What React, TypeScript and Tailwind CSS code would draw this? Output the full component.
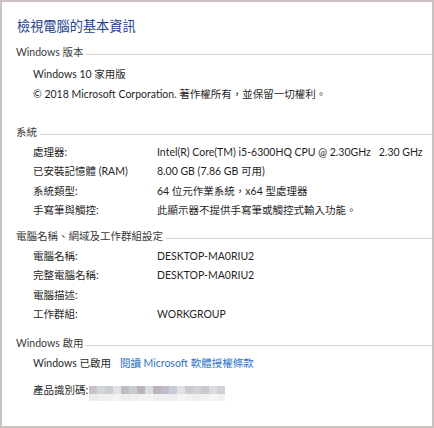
const font = { fontFamily: 'Lato, "Noto Sans CJK TC", sans-serif' }

const blurTop = ['#c9c1c9', '#d1d5d9', '#c9cdd5', '#e1e1e3', '#c1b9c3', '#c9cdd1', '#bbb3bb', '#d9dde1', '#bbb3bd', '#c3bbc9', '#c9cdd5', '#e1e1e3', '#c9cdd1', '#d1d1d9', '#c9c9d1', '#dadde1', '#d0d0d6']
const blurBottom = ['#ececee', '#eeeeee', '#f0f0f0', '#f3f3f3', '#eeeeef', '#efefef', '#f1f1f1', '#f4f4f4', '#eeeeee', '#f0f0f0', '#efeff0', '#f4f4f4', '#f1f1f1', '#eeeeef', '#f2f2f2', '#f4f4f4', '#f2f2f2']

function Header({ title, className }: { title: string, className?: string }) {
    return (
        <div className={`flex items-center h-[20px] pl-[14px] ${className ?? ''}`}>
            <div className="text-[10.5px] text-[#3a3a3a] whitespace-nowrap">{title}</div>
            <div className="flex-1 h-px bg-[#d8d3d3] ml-[3px] mt-[2px]"></div>
        </div>
    )
}

function Row({ label, value }: { label: string, value?: string }) {
    return (
        <div className="flex items-center h-[19.5px] pl-[31px] text-[10.5px] text-[#1f1f1f]">
            <div className="w-[124px] whitespace-nowrap">{label}</div>
            <div className="whitespace-pre">{value}</div>
        </div>
    )
}

export default function App() {
    return (
        <div style={font} className="w-[434px] h-[428px] border-2 border-[#cbc1c1] bg-white flex flex-col">
            <div className="mt-[15px] h-[20px] flex items-center pl-[15px] text-[13.2px] text-[#233f95]">檢視電腦的基本資訊</div>

            <Header title="Windows 版本" className="mt-[6px]" />
            <div className="mt-[2.5px]">
                <Row label="Windows 10 家用版" />
                <div className="flex items-center h-[19.5px] pl-[31px] text-[10.5px] text-[#1f1f1f] whitespace-nowrap">
                    © 2018 Microsoft Corporation. 著作權所有，並保留一切權利。
                </div>
            </div>

            <Header title="系統" className="mt-[18.5px]" />
            <div>
                <Row label="處理器:" value="Intel(R) Core(TM) i5-6300HQ CPU @ 2.30GHz   2.30 GHz" />
                <Row label="已安裝記憶體 (RAM)" value="8.00 GB (7.86 GB 可用)" />
                <Row label="系統類型:" value="64 位元作業系統，x64 型處理器" />
                <Row label="手寫筆與觸控:" value="此顯示器不提供手寫筆或觸控式輸入功能。" />
            </div>

            <Header title="電腦名稱、網域及工作群組設定" className="mt-[6px]" />
            <div>
                <Row label="電腦名稱:" value="DESKTOP-MA0RIU2" />
                <Row label="完整電腦名稱:" value="DESKTOP-MA0RIU2" />
                <Row label="電腦描述:" />
                <Row label="工作群組:" value="WORKGROUP" />
            </div>

            <Header title="Windows 啟用" className="mt-[9px]" />
            <div className="flex items-center h-[19.5px] pl-[31px] text-[10.5px] text-[#1f1f1f] whitespace-nowrap">
                <span>Windows 已啟用</span>
                <span className="ml-[9px] text-[#2b73cc]">閱讀 Microsoft 軟體授權條款</span>
            </div>
            <div className="flex items-center h-[19.5px] mt-[8px] pl-[31px] text-[10.5px] text-[#1f1f1f]">
                <span className="whitespace-nowrap">產品識別碼:</span>
                <div className="ml-[1px] flex flex-col mt-[4px]">
                    <div className="flex">
                        {blurTop.map((c, i) => <div key={i} className="w-[8px] h-[8px]" style={{ backgroundColor: c }}></div>)}
                    </div>
                    <div className="flex">
                        {blurBottom.map((c, i) => <div key={i} className="w-[8px] h-[7px]" style={{ backgroundColor: c }}></div>)}
                    </div>
                </div>
            </div>
        </div>
    )
}
